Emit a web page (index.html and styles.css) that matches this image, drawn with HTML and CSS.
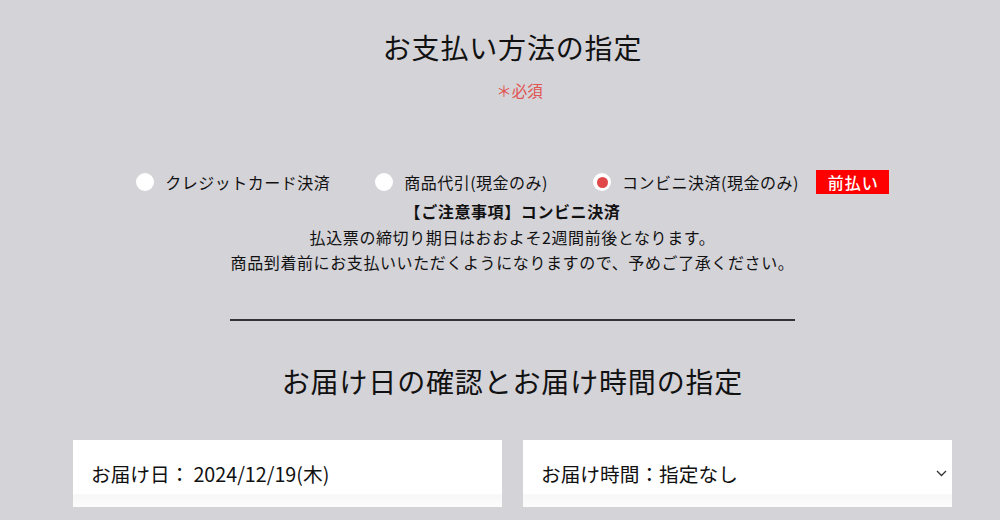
FILE: index.html
```html
<!DOCTYPE html>
<html lang="ja">
<head>
<meta charset="utf-8">
<title>お支払い方法の指定</title>
<link rel="stylesheet" href="styles.css">
</head>
<body>
<div class="page">
  <section class="payment">
    <h2 class="title">お支払い方法の指定</h2>
    <p class="required">＊必須</p>
    <div class="methods">
      <label class="method">
        <span class="radio"></span>
        <span class="method-label">クレジットカード決済</span>
      </label>
      <label class="method">
        <span class="radio"></span>
        <span class="method-label">商品代引(現金のみ)</span>
      </label>
      <label class="method method-last">
        <span class="radio radio-checked"></span>
        <span class="method-label">コンビニ決済(現金のみ)</span>
        <span class="badge">前払い</span>
      </label>
    </div>
    <div class="notice">
      <p class="notice-head">【ご注意事項】コンビニ決済</p>
      <p>払込票の締切り期日はおおよそ2週間前後となります。</p>
      <p>商品到着前にお支払いいただくようになりますので、予めご了承ください。</p>
    </div>
    <div class="divider"></div>
  </section>
  <section class="delivery">
    <h2 class="title title-delivery">お届け日の確認とお届け時間の指定</h2>
    <div class="fields">
      <div class="field"><span>お届け日：</span><span class="date">2024/12/19(木)</span></div>
      <div class="field field-select">
        <span>お届け時間：指定なし</span>
        <svg class="chevron" width="11" height="7" viewBox="0 0 11 7"><polyline points="1,1 5.5,5.5 10,1" fill="none" stroke="#333" stroke-width="1.3"/></svg>
      </div>
    </div>
  </section>
</div>
</body>
</html>
```
FILE: styles.css
```css
html, body {
  margin: 0;
  padding: 0;
}
body {
  background: #d4d3d8;
  color: #111;
  font-family: "Noto Sans CJK JP", "Noto Sans", sans-serif;
}
.page {
  width: 879px;
  margin-left: 73px;
  padding-top: 27px;
}
p {
  margin: 0;
}
.title {
  margin: 0;
  font-size: 28px;
  font-weight: 400;
  line-height: 40px;
  letter-spacing: 0.03em;
  text-align: center;
}
.required {
  margin-top: 11px;
  padding-left: 14px;
  text-align: center;
  color: #e05452;
  font-size: 15.5px;
  line-height: 24px;
}
.methods {
  margin-top: 68px;
  display: flex;
  justify-content: center;
  align-items: center;
  height: 24px;
}
.method {
  display: flex;
  align-items: center;
  margin-right: 45px;
}
.method-last {
  margin-right: 0;
}
.radio {
  width: 18px;
  height: 18px;
  border-radius: 50%;
  background: #fff;
  display: flex;
  align-items: center;
  justify-content: center;
  margin-right: 11px;
}
.radio-checked::after {
  content: "";
  width: 11px;
  height: 11px;
  border-radius: 50%;
  background: #e0484a;
}
.method-label {
  font-size: 16px;
  letter-spacing: 0.5px;
  line-height: 24px;
}
.badge {
  margin-left: 17px;
  background: #ff0000;
  color: #fff;
  font-size: 16px;
  line-height: 24px;
  height: 24px;
  padding: 0 10px 0 12px;
  letter-spacing: 1px;
  font-weight: 500;
}
.notice {
  margin-top: 5px;
  text-align: center;
  font-size: 16px;
  line-height: 25.5px;
  letter-spacing: 0.6px;
}
.notice-head {
  font-weight: 700;
}
.divider {
  width: 565px;
  height: 2px;
  background: #333;
  margin: 43px auto 0;
}
.title-delivery {
  margin-top: 40px;
}
.fields {
  margin-top: 39px;
  display: grid;
  grid-template-columns: 1fr 1fr;
  column-gap: 21px;
}
.field {
  height: 67px;
  background: linear-gradient(#fff 0, #fff 80%, #f7f7f8 82%, #fcfcfc 100%);
  display: flex;
  align-items: center;
  padding-left: 18px;
  font-size: 19.7px;
  color: #111;
}
.date {
  margin-left: 4px;
}
.field-select {
  justify-content: space-between;
  padding-right: 5px;
}
.chevron {
  display: block;
}
```
